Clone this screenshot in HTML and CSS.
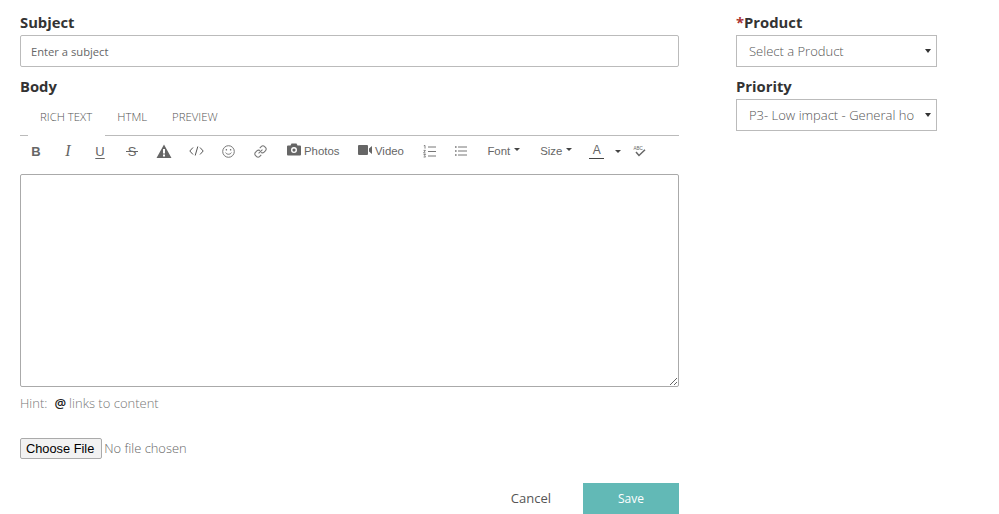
FILE: index.html
```html
<!DOCTYPE html>
<html lang="en">
<head>
<meta charset="utf-8">
<title>New post</title>
<link rel="stylesheet" href="styles.css">
</head>
<body>
<div class="page">
  <main class="main">
    <label class="label" for="subject">Subject</label>
    <input class="subject" id="subject" type="text" placeholder="Enter a subject">
    <div class="label body-label">Body</div>
    <div class="tabs">
      <span class="tab active">RICH TEXT</span>
      <span class="tab">HTML</span>
      <span class="tab">PREVIEW</span>
      <span class="tab-fill"></span>
    </div>
    <div class="toolbar">
      <span class="tool glyph bold">B</span>
      <span class="tool glyph italic">I</span>
      <span class="tool glyph under">U</span>
      <span class="tool glyph strike">S</span>
      <span class="tool"><svg width="16" height="14" viewBox="0 0 16 14"><path fill="#666" fill-rule="evenodd" d="M8 0.500 15.500 14H0.500ZM7 5v4.500h2V5ZM7 10.500v2h2v-2Z"/></svg></span>
      <span class="tool"><svg width="15" height="10" viewBox="0 0 15 10" fill="none" stroke="#555" stroke-width="1"><path d="M4 1.500 0.800 5 4 8.500M11 1.500 14.200 5 11 8.500M8.800 0.500 6.200 9.500"/></svg></span>
      <span class="tool"><svg width="13" height="13" viewBox="0 0 13 13" fill="none" stroke="#777" stroke-width="1"><circle cx="6.500" cy="6.500" r="5.800"/><path d="M3.600 7.600c1.200 2.200 4.600 2.200 5.800 0"/><path d="M4.400 4v1.400M8.600 4v1.400" stroke-width="1.300"/></svg></span>
      <span class="tool"><svg width="13" height="13" viewBox="0 0 12 12" fill="none" stroke="#777" stroke-width="1"><path d="M5.300 2.900 6.900 1.300a1.900 1.900 0 0 1 2.700 0l1.100 1.100a1.900 1.900 0 0 1 0 2.700L9.100 6.700a1.900 1.900 0 0 1-2.700 0"/><path d="M6.700 9.100 5.100 10.700a1.900 1.900 0 0 1-2.700 0L1.300 9.600a1.900 1.900 0 0 1 0-2.700L2.900 5.300a1.900 1.900 0 0 1 2.700 0"/><path d="M4.200 7.800 7.800 4.200"/></svg></span>
      <span class="tool text-tool photos"><svg class="cam" width="14" height="13" viewBox="0 0 14 13"><path fill="#666" fill-rule="evenodd" d="M4.500 0.500h5L10.500 2.500H13a1 1 0 0 1 1 1v8a1 1 0 0 1-1 1H1a1 1 0 0 1-1-1v-8a1 1 0 0 1 1-1h2.500ZM7 4.100a3 3 0 1 0 0 6 3 3 0 0 0 0-6ZM7 5.500a1.600 1.600 0 1 1 0 3.200A1.600 1.600 0 0 1 7 5.500Z"/></svg>Photos</span>
      <span class="tool text-tool video"><svg class="cam" width="14" height="10" viewBox="0 0 14 10"><path fill="#666" d="M0 1a1 1 0 0 1 1-1h8a1 1 0 0 1 1 1v8a1 1 0 0 1-1 1H1a1 1 0 0 1-1-1ZM11 3.500 14 1v8l-3-2.500Z"/></svg>Video</span>
      <span class="tool"><svg width="13" height="13" viewBox="0 0 13 13" fill="none" stroke="#777"><path d="M5 2h8M5 6.500h8M5 11h8"/><path stroke-width=".9" d="M.8.800 2 .400v3.200M.6 5.400h1.800L.6 8h2M.6 9.500h2L1.500 10.800 2.600 12H.6"/></svg></span>
      <span class="tool"><svg width="12" height="10" viewBox="0 0 12 10" fill="none" stroke="#777"><path d="M3 1h9M3 5h9M3 9h9"/><path stroke-width="1.600" d="M0 1h1.600M0 5h1.600M0 9h1.600"/></svg></span>
      <span class="tool text-tool font-tool">Font<i class="caret"></i></span>
      <span class="tool text-tool size-tool">Size<i class="caret"></i></span>
      <span class="tool color-tool"><span class="color-a">A</span><i class="caret caret-far"></i></span>
      <span class="tool spell"><svg width="13" height="13" viewBox="0 0 13 13"><text x="0.500" y="4.500" class="abc">ABC</text><path d="M3 7 6 10.500 12 4.800" fill="none" stroke="#666" stroke-width="1.500"/></svg></span>
    </div>
    <textarea class="editor" aria-label="Body"></textarea>
    <p class="hint">Hint:<b class="at">@</b>links to content</p>
    <input class="file" type="file">
    <div class="actions">
      <a class="cancel">Cancel</a>
      <button class="save" type="button">Save</button>
    </div>
  </main>
  <aside class="side">
    <label class="label" for="product"><span class="req">*</span>Product</label>
    <div class="pick-wrap"><select class="pick" id="product"><option>Select a Product</option></select></div>
    <label class="label side-second" for="priority">Priority</label>
    <div class="pick-wrap"><select class="pick" id="priority"><option>P3- Low impact - General how-to questions</option></select></div>
  </aside>
</div>
</body>
</html>
```

FILE: styles.css
```css
* { box-sizing: border-box; }
html, body { margin: 0; height: 514px; overflow: hidden; background: #fff; }
body { font-family: "Open Sans", sans-serif; color: #333; }
.page { display: flex; gap: 57px; padding: 12px 0 0 20px; }
.main { width: 659px; flex: none; }
.side { width: 201px; flex: none; }
.label { display: block; margin-bottom: 3px; font-size: 14.800px; font-weight: 700; line-height: 20px; color: #333; }
.req { color: #a33; }
.subject { display: block; width: 100%; height: 32px; padding: 0 10px; border: 1px solid #bbb; border-radius: 2px; font: 400 11.200px "Open Sans", sans-serif; color: #555; outline: none; }
.subject::placeholder { color: #666; opacity: 1; }
.body-label { margin-top: 9px; }
.tabs { display: flex; height: 37px; font-size: 11.400px; font-weight: 300; color: #555; }
.tab { display: flex; align-items: center; padding: 0 12.500px 2px; border-bottom: 1px solid #bbb; }
.tab:first-child { margin-left: 8px; padding-left: 12px; border-bottom-color: transparent; position: relative; }
.tab:first-child::before { content: ""; position: absolute; left: -8px; bottom: -1px; width: 8px; height: 1px; background: #bbb; }
.tab-fill { flex: 1; border-bottom: 1px solid #bbb; }
.toolbar { display: flex; align-items: center; height: 38px; padding-bottom: 8px; font: 400 11.400px "Liberation Sans", sans-serif; color: #666; }
.tool { flex: none; display: flex; align-items: center; justify-content: center; width: 32px; height: 24px; }
.glyph { font-family: "Liberation Sans", sans-serif; font-size: 13px; color: #666; position: relative; }
.bold { font-weight: 700; }
.italic { font-family: "Liberation Serif", serif; font-style: italic; font-size: 16px; }
.under { text-decoration: underline; text-underline-offset: 2px; }
.strike::after { content: ""; position: absolute; left: 10px; right: 10px; top: 12px; height: 1px; background: #666; }
.text-tool { width: auto; gap: 3px; }
.cam { margin-top: -3px; }
.photos { padding: 0 9px 0 11px; }
.video { padding: 0 9.500px; }
.font-tool { padding: 0 10.500px 0 10px; }
.size-tool { padding: 0 10px 0 9.500px; }
.caret { display: inline-block; width: 0; height: 0; margin: -3px 0 0 1px; border: 3.500px solid transparent; border-top-color: #444; border-bottom: 0; }
.color-tool { justify-content: flex-start; width: 51px; padding-left: 7px; }
.color-a { display: block; width: 15px; text-align: center; font-size: 12px; line-height: 15px; border-bottom: 1px solid #444; }
.caret-far { margin: 0 0 0 11px; }
.spell { width: 13px; }
.abc { font: 400 4.500px "Liberation Sans", sans-serif; fill: #666; }
.editor { display: block; width: 100%; height: 213px; padding: 8px; margin: 0; border: 1px solid #aaa; border-radius: 2px; outline: none; font: 400 13px "Open Sans", sans-serif; }
.hint { margin: 6px 0 0; height: 20px; font-size: 13px; line-height: 20px; font-weight: 300; color: #777; }
.at { margin: 0 3px 0 7px; font-weight: 600; color: #222; }
.file { display: block; margin-top: 25px; width: 300px; height: 21px; font: 300 12.900px "Open Sans", sans-serif; color: #666; }
.file::file-selector-button { height: 21px; margin-right: 2px; padding: 0 7px 0 5px; border: 1px solid #aaa; border-radius: 2px; background: #f2f2f2; font: 400 12.800px "Liberation Sans", sans-serif; color: #000; }
.actions { display: flex; justify-content: flex-end; align-items: center; margin-top: 24px; }
.cancel { margin: 0 32px 2px 0; font-size: 13px; color: #555; }
.save { width: 96px; height: 31px; border: 0; background: #62b9b6; color: #fff; font: 400 12px "Open Sans", sans-serif; }
.pick-wrap { position: relative; }
.pick-wrap::after { content: ""; position: absolute; right: 6px; top: 14px; width: 0; height: 0; border: 3px solid transparent; border-top: 4px solid #333; border-bottom: 0; pointer-events: none; }
.pick { display: block; width: 100%; height: 32px; padding: 0 22px 0 12px; border: 1px solid #bbb; border-radius: 0; background: #fff; appearance: none; font: 300 13px "Open Sans", sans-serif; color: #555; outline: none; }
.side-second { margin-top: 9px; }
```
